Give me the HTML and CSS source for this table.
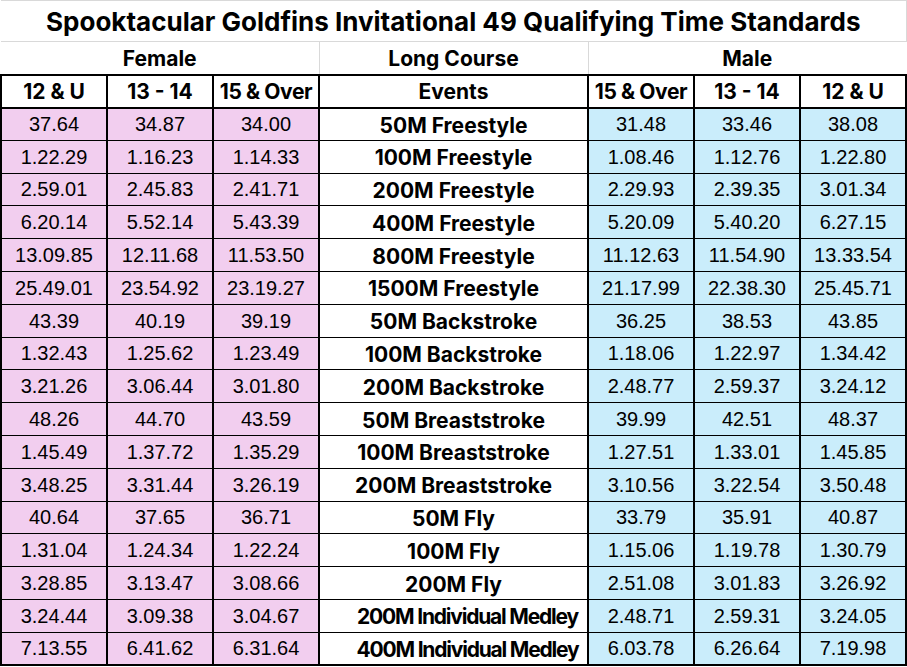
FILE: index.html
```html
<!DOCTYPE html>
<html>
<head>
<meta charset="utf-8">
<link rel="stylesheet" href="styles.css">
</head>
<body>
<table class="sheet">
  <colgroup>
    <col class="c-age"><col class="c-age"><col class="c-age">
    <col class="c-event">
    <col class="c-age"><col class="c-age"><col class="c-age">
  </colgroup>
  <tr class="r-title"><td colspan="7" class="title">Spooktacular Goldfins Invitational 49 Qualifying Time Standards</td></tr>
  <tr class="r-group">
    <td colspan="3" class="group">Female</td>
    <td class="group mid">Long Course</td>
    <td colspan="3" class="group">Male</td>
  </tr>
  <tr class="r-head">
    <th>12 &amp; U</th><th>13 - 14</th><th class="tight">15 &amp; Over</th>
    <th>Events</th>
    <th class="tight">15 &amp; Over</th><th>13 - 14</th><th>12 &amp; U</th>
  </tr>
  <tr><td class="f">37.64</td><td class="f">34.87</td><td class="f">34.00</td><td class="ev">50M Freestyle</td><td class="m">31.48</td><td class="m">33.46</td><td class="m">38.08</td></tr>
  <tr><td class="f">1.22.29</td><td class="f">1.16.23</td><td class="f">1.14.33</td><td class="ev">100M Freestyle</td><td class="m">1.08.46</td><td class="m">1.12.76</td><td class="m">1.22.80</td></tr>
  <tr><td class="f">2.59.01</td><td class="f">2.45.83</td><td class="f">2.41.71</td><td class="ev">200M Freestyle</td><td class="m">2.29.93</td><td class="m">2.39.35</td><td class="m">3.01.34</td></tr>
  <tr><td class="f">6.20.14</td><td class="f">5.52.14</td><td class="f">5.43.39</td><td class="ev">400M Freestyle</td><td class="m">5.20.09</td><td class="m">5.40.20</td><td class="m">6.27.15</td></tr>
  <tr><td class="f">13.09.85</td><td class="f">12.11.68</td><td class="f">11.53.50</td><td class="ev">800M Freestyle</td><td class="m">11.12.63</td><td class="m">11.54.90</td><td class="m">13.33.54</td></tr>
  <tr><td class="f">25.49.01</td><td class="f">23.54.92</td><td class="f">23.19.27</td><td class="ev">1500M Freestyle</td><td class="m">21.17.99</td><td class="m">22.38.30</td><td class="m">25.45.71</td></tr>
  <tr><td class="f">43.39</td><td class="f">40.19</td><td class="f">39.19</td><td class="ev">50M Backstroke</td><td class="m">36.25</td><td class="m">38.53</td><td class="m">43.85</td></tr>
  <tr><td class="f">1.32.43</td><td class="f">1.25.62</td><td class="f">1.23.49</td><td class="ev">100M Backstroke</td><td class="m">1.18.06</td><td class="m">1.22.97</td><td class="m">1.34.42</td></tr>
  <tr><td class="f">3.21.26</td><td class="f">3.06.44</td><td class="f">3.01.80</td><td class="ev">200M Backstroke</td><td class="m">2.48.77</td><td class="m">2.59.37</td><td class="m">3.24.12</td></tr>
  <tr><td class="f">48.26</td><td class="f">44.70</td><td class="f">43.59</td><td class="ev">50M Breaststroke</td><td class="m">39.99</td><td class="m">42.51</td><td class="m">48.37</td></tr>
  <tr><td class="f">1.45.49</td><td class="f">1.37.72</td><td class="f">1.35.29</td><td class="ev">100M Breaststroke</td><td class="m">1.27.51</td><td class="m">1.33.01</td><td class="m">1.45.85</td></tr>
  <tr><td class="f">3.48.25</td><td class="f">3.31.44</td><td class="f">3.26.19</td><td class="ev">200M Breaststroke</td><td class="m">3.10.56</td><td class="m">3.22.54</td><td class="m">3.50.48</td></tr>
  <tr><td class="f">40.64</td><td class="f">37.65</td><td class="f">36.71</td><td class="ev">50M Fly</td><td class="m">33.79</td><td class="m">35.91</td><td class="m">40.87</td></tr>
  <tr><td class="f">1.31.04</td><td class="f">1.24.34</td><td class="f">1.22.24</td><td class="ev">100M Fly</td><td class="m">1.15.06</td><td class="m">1.19.78</td><td class="m">1.30.79</td></tr>
  <tr><td class="f">3.28.85</td><td class="f">3.13.47</td><td class="f">3.08.66</td><td class="ev">200M Fly</td><td class="m">2.51.08</td><td class="m">3.01.83</td><td class="m">3.26.92</td></tr>
  <tr><td class="f">3.24.44</td><td class="f">3.09.38</td><td class="f">3.04.67</td><td class="ev im">200M Individual Medley</td><td class="m">2.48.71</td><td class="m">2.59.31</td><td class="m">3.24.05</td></tr>
  <tr class="last"><td class="f">7.13.55</td><td class="f">6.41.62</td><td class="f">6.31.64</td><td class="ev im">400M Individual Medley</td><td class="m">6.03.78</td><td class="m">6.26.64</td><td class="m">7.19.98</td></tr>
</table>
</body>
</html>
```
FILE: styles.css
```css
html, body {
  margin: 0;
  padding: 0;
  background: #ffffff;
}
.sheet {
  border-collapse: collapse;
  table-layout: fixed;
  width: 907px;
  font-family: "Liberation Sans", Arial, sans-serif;
  color: #000;
}
.c-age { width: 106px; }
.c-event { width: 269px; }
td, th {
  padding: 0;
  text-align: center;
  white-space: nowrap;
  overflow: hidden;
}
.r-title { height: 41px; }
.title {
  font-family: Inter, "Noto Sans", sans-serif;
  font-weight: 700;
  font-size: 26px;
  border-top: 1px solid #d9d9d9;
  border-right: 1px solid #d9d9d9;
  border-bottom: 1px solid #d9d9d9;
}
.r-group { height: 33px; }
.group {
  font-family: Inter, "Noto Sans", sans-serif;
  font-weight: 700;
  font-size: 21px;
  padding-top: 2px;
}
.mid {
  border-left: 1px solid #d9d9d9;
  border-right: 1px solid #d9d9d9;
}
.r-head { height: 33px; }
.r-head th {
  font-family: Inter, "Noto Sans", sans-serif;
  font-weight: 700;
  font-size: 21px;
  border: 2px solid #000;
  padding-top: 1px;
}
.r-head th.tight { letter-spacing: -0.4px; }
.sheet tr:not(.r-title):not(.r-group):not(.r-head) { height: 32.8px; }
.f, .m, .ev {
  border-left: 2px solid #000;
  border-right: 2px solid #000;
  border-bottom: 1px solid #000;
  font-size: 20px;
  padding-top: 1px;
}
.f { background: #f2ceef; }
.m { background: #caedfb; }
.ev {
  font-family: Inter, "Noto Sans", sans-serif;
  font-weight: 700;
  font-size: 21px;
  background: #fff;
  padding-top: 2px;
}
.ev.im {
  letter-spacing: -1.2px;
  padding-left: 28px;
}
.last td { border-bottom: 2px solid #000; }
```
